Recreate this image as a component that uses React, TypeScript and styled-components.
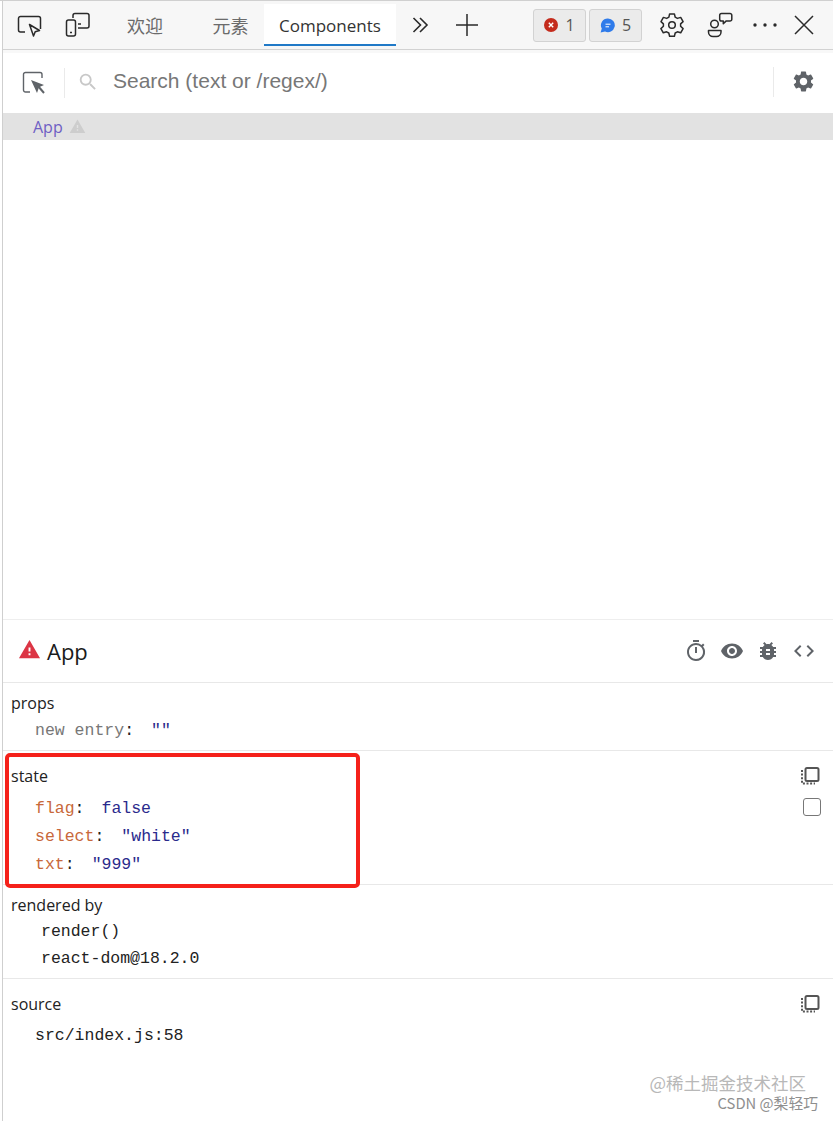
import styled, { createGlobalStyle } from 'styled-components';
import { MdBugReport, MdCode, MdOutlineTimer, MdSearch, MdSettings, MdVisibility, MdWarning } from 'react-icons/md';

const UI_FONT = '"Open Sans", "Noto Sans CJK SC", sans-serif';
const MONO_FONT = '"Liberation Mono", monospace';

const GlobalStyle = createGlobalStyle`
  html, body {
    margin: 0;
    padding: 0;
    background: #fff;
  }
`;

const Page = styled.div`
  position: relative;
  box-sizing: border-box;
  width: 833px;
  height: 1121px;
  overflow: hidden;
  padding-left: 3px;
  background: #fff;
  border-top: 1px solid #d0d0d0;
  font-family: ${UI_FONT};
  color: #222;

  &::before {
    content: '';
    position: absolute;
    left: 2px;
    top: 0;
    bottom: 0;
    width: 1px;
    background: #cfcfcf;
  }
`;

const Toolbar = styled.div`
  display: flex;
  align-items: stretch;
  height: 48px;
  padding-left: 3px;
  background: #f7f7f7;
  border-bottom: 1px solid #d2d2d2;
  box-sizing: content-box;
`;

const ToolButton = styled.div<{ $w?: number }>`
  display: flex;
  align-items: center;
  justify-content: center;
  flex: none;
  width: ${(p) => p.$w ?? 48}px;
  color: #2a2a2a;
`;

const Tabs = styled.div`
  display: flex;
  margin-left: 10px;
`;

const Tab = styled.div<{ $active?: boolean }>`
  display: flex;
  align-items: center;
  padding: 2px 15.5px 0 15px;
  font-size: ${(p) => (p.$active ? 17 : 18)}px;
  color: ${(p) => (p.$active ? '#333' : '#6b6b6b')};
  background: ${(p) => (p.$active ? '#fff' : 'transparent')};
  border-bottom: 2px solid ${(p) => (p.$active ? '#2079c7' : 'transparent')};
  margin-top: 3px;
  margin-bottom: 3px;
  box-sizing: border-box;

  &:first-child {
    margin-right: 19px;
  }
`;

const Counters = styled.div`
  display: flex;
  align-items: center;
  gap: 3px;
  margin-left: auto;
  margin-right: 6px;
`;

const Counter = styled.div`
  display: flex;
  align-items: center;
  justify-content: center;
  gap: 7px;
  box-sizing: border-box;
  width: 53px;
  height: 33px;
  background: #ebebeb;
  border: 1px solid #d2d2d2;
  border-radius: 3px;
  font-size: 16px;
  color: #555;
`;

const RightTools = styled.div`
  display: flex;
  margin-right: 11px;
`;

const SearchBar = styled.div`
  display: flex;
  align-items: center;
  height: 60px;
  border-top: 3px solid #f8f8f8;
  box-sizing: content-box;
`;

const SelectorSlot = styled.div`
  display: flex;
  align-items: center;
  justify-content: center;
  width: 61px;
  height: 30px;
  color: #5f6368;
  border-right: 1px solid #eaeaea;
`;

const SearchGlyph = styled(MdSearch)`
  margin: -3px 0 0 12px;
  color: #c8c8c8;
  flex: none;
`;

const SearchText = styled.div`
  flex: 1;
  margin: -4px 0 0 14px;
  font-family: 'Liberation Sans', sans-serif;
  font-size: 21px;
  color: #777;
`;

const SettingsSlot = styled.div`
  display: flex;
  align-items: center;
  justify-content: center;
  width: 59px;
  height: 30px;
  margin-top: -3px;
  color: #5f6368;
  border-left: 1px solid #eaeaea;
`;

const TreeRow = styled.div`
  display: flex;
  align-items: center;
  gap: 6px;
  height: 27px;
  padding-left: 30px;
  background: #e2e2e2;
  font-size: 16px;
  color: #6f5fc4;
`;

const TreeArea = styled.div`
  height: 479px;
  border-bottom: 1px solid #eeeeee;
`;

const InspectHeader = styled.div`
  display: flex;
  align-items: center;
  height: 62px;
  padding: 0 17px 0 15px;
  border-bottom: 1px solid #e8e8e8;
`;

const HeaderWarning = styled(MdWarning)`
  margin-top: -4px;
  color: #dc3545;
`;

const ComponentName = styled.div`
  flex: 1;
  margin-left: 6px;
  font-size: 22px;
  color: #1a1a1a;
`;

const InspectActions = styled.div`
  display: flex;
  gap: 12px;
  color: #5f6368;
`;

const Section = styled.section<{ $h: number; $last?: boolean; $top?: number }>`
  position: relative;
  box-sizing: border-box;
  height: ${(p) => p.$h}px;
  padding: ${(p) => p.$top ?? 7}px 0 0 8px;
  border-bottom: ${(p) => (p.$last ? 'none' : '1px solid #e8e8e8')};
`;

const SectionHead = styled.div<{ $gap?: number }>`
  display: flex;
  align-items: center;
  justify-content: space-between;
  height: 26px;
  padding-right: 13px;
  margin-bottom: ${(p) => p.$gap ?? 0}px;
  font-size: 16px;
  color: #222;
`;

const Row = styled.div<{ $h?: number; $indent?: number }>`
  display: flex;
  align-items: center;
  height: ${(p) => p.$h ?? 28}px;
  padding-left: ${(p) => p.$indent ?? 24}px;
  font-family: ${MONO_FONT};
  font-size: 16.5px;
  white-space: pre;
  color: #222;
`;

const Key = styled.span<{ $muted?: boolean }>`
  color: ${(p) => (p.$muted ? '#777' : '#c8683a')};
`;

const Value = styled.span`
  margin-left: 17px;
  color: #2a2a8c;
`;

const CheckBox = styled.div`
  position: absolute;
  right: 12px;
  top: 47px;
  box-sizing: border-box;
  width: 18px;
  height: 18px;
  border: 1.5px solid #777;
  border-radius: 3px;
  background: #fff;
`;

const Highlight = styled.div`
  position: absolute;
  left: 5px;
  top: 752px;
  box-sizing: border-box;
  width: 355px;
  height: 135px;
  border: 4px solid #f5211a;
  border-radius: 5px;
  pointer-events: none;
`;

const Watermark = styled.div`
  position: absolute;
  right: 15px;
  bottom: 8px;
  display: flex;
  flex-direction: column;
  align-items: flex-end;
  font-family: 'Noto Sans CJK SC', sans-serif;
  line-height: 20px;
`;

const WatermarkMain = styled.div`
  margin-right: 12px;
  font-size: 17.5px;
  color: #b8b8b8;
`;

const WatermarkSub = styled.div`
  font-size: 14.8px;
  color: #8f8f8f;
`;

const CopyIcon = () => (
  <svg width="20" height="20" viewBox="0 0 20 20" fill="none" stroke="#555">
    <rect x="5.5" y="2" width="13" height="13" rx="1.5" strokeWidth="2" />
    <path d="M2 4v13.5h13" strokeWidth="2" strokeDasharray="2 1.6" />
  </svg>
);

const App = () => (
  <Page>
    <GlobalStyle />
    <Toolbar>
      <ToolButton>
        <svg width="26" height="24" viewBox="0 0 26 24" fill="none" stroke="#2a2a2a" strokeWidth="1.5">
          <path d="M8 19H3.5A2 2 0 0 1 1.5 17V5.5a2 2 0 0 1 2-2h18a2 2 0 0 1 2 2V16" />
          <path d="M12.5 11.5l10 6-4.3 1.2-1.7 4.3z" strokeLinejoin="round" />
        </svg>
      </ToolButton>
      <ToolButton>
        <svg width="26" height="26" viewBox="0 0 26 26" fill="none" stroke="#2a2a2a" strokeWidth="1.5">
          <path d="M8 6V3.5a2 2 0 0 1 2-2h12a2 2 0 0 1 2 2V14a2 2 0 0 1-2 2h-9" />
          <rect x="1.5" y="8" width="9" height="16" rx="2" />
          <path d="M5 20.5h2M13 12h3" />
        </svg>
      </ToolButton>
      <Tabs>
        <Tab>欢迎</Tab>
        <Tab>元素</Tab>
        <Tab $active>Components</Tab>
      </Tabs>
      <ToolButton>
        <svg width="18" height="18" viewBox="0 0 18 18" fill="none" stroke="#2a2a2a" strokeWidth="1.6">
          <path d="M2.5 2l7 7-7 7M9 2l7 7-7 7" />
        </svg>
      </ToolButton>
      <ToolButton $w={46}>
        <svg width="24" height="24" viewBox="0 0 24 24" fill="none" stroke="#2a2a2a" strokeWidth="1.5">
          <path d="M12 1v22M1 12h22" />
        </svg>
      </ToolButton>
      <Counters>
        <Counter>
          <svg width="14" height="14" viewBox="0 0 14 14">
            <circle cx="7" cy="7" r="7" fill="#c42b1c" />
            <path d="M4.8 4.8l4.4 4.4M9.2 4.8l-4.4 4.4" stroke="#fff" strokeWidth="1.4" />
          </svg>
          1
        </Counter>
        <Counter>
          <svg width="15" height="15" viewBox="0 0 15 15">
            <path d="M8 .5a6.8 6.8 0 1 1-3 12.9L.6 14.6l1.2-4A6.8 6.8 0 0 1 8 .5z" fill="#2f7bea" />
            <path d="M5.5 6.2h5M5.5 8.8h3.5" stroke="#fff" strokeWidth="1" />
          </svg>
          5
        </Counter>
      </Counters>
      <RightTools>
        <ToolButton>
          <svg width="26" height="26" viewBox="0 0 26 26" fill="none" stroke="#2a2a2a" strokeWidth="1.5" strokeLinejoin="round">
            <circle cx="13" cy="13" r="3.3" />
            <path d="M10.6 1.9h4.8l.8 3.3 2.2 1.2 3.3-1 2.4 4.2-2.5 2.3v2.4l2.5 2.3-2.4 4.2-3.3-1-2.2 1.2-.8 3.3h-4.8l-.8-3.3-2.2-1.2-3.3 1-2.4-4.2 2.5-2.3v-2.4L2 9.6l2.4-4.2 3.3 1 2.2-1.2z" />
          </svg>
        </ToolButton>
        <ToolButton>
          <svg width="26" height="26" viewBox="0 0 26 26" fill="none" stroke="#2a2a2a" strokeWidth="1.5" strokeLinejoin="round">
            <circle cx="7.5" cy="12" r="3.8" />
            <path d="M1.5 18.5h12.5v1.5a4.5 4.5 0 0 1-4.5 4.5H6a4.5 4.5 0 0 1-4.5-4.5z" />
            <path d="M14.5 1.5h8.5a1.8 1.8 0 0 1 1.8 1.8v4a1.8 1.8 0 0 1-1.8 1.8h-4l-2.7 2.6V9h-1.8a1.8 1.8 0 0 1-1.8-1.8V3.3a1.8 1.8 0 0 1 1.8-1.8z" />
          </svg>
        </ToolButton>
        <ToolButton $w={42}>
          <svg width="24" height="4" viewBox="0 0 24 4" fill="#2a2a2a">
            <circle cx="2" cy="2" r="1.7" />
            <circle cx="12" cy="2" r="1.7" />
            <circle cx="22" cy="2" r="1.7" />
          </svg>
        </ToolButton>
        <ToolButton $w={36}>
          <svg width="20" height="20" viewBox="0 0 20 20" fill="none" stroke="#2a2a2a" strokeWidth="1.5">
            <path d="M1 1l18 18M19 1L1 19" />
          </svg>
        </ToolButton>
      </RightTools>
    </Toolbar>

    <SearchBar>
      <SelectorSlot>
        <svg width="24" height="24" viewBox="0 0 24 24" fill="none">
          <path d="M8 21H3.500a2 2 0 0 1-2-2V3.500a2 2 0 0 1 2-2H18a2 2 0 0 1 2 2V7" stroke="#5f6368" strokeWidth="1.4" />
          <path d="M9 9l13 5-5 2.300-2 5.700z" fill="#5f6368" />
          <path d="M16 15l6 7" stroke="#5f6368" strokeWidth="2" />
        </svg>
      </SelectorSlot>
      <SearchGlyph size={22} />
      <SearchText>Search (text or /regex/)</SearchText>
      <SettingsSlot>
        <MdSettings size={25} />
      </SettingsSlot>
    </SearchBar>

    <TreeRow>
      App
      <MdWarning size={17} color="#cdcdcd" />
    </TreeRow>
    <TreeArea />

    <InspectHeader>
      <HeaderWarning size={23} />
      <ComponentName>App</ComponentName>
      <InspectActions>
        <MdOutlineTimer size={24} />
        <MdVisibility size={24} />
        <MdBugReport size={24} />
        <MdCode size={24} />
      </InspectActions>
    </InspectHeader>

    <Section $h={68}>
      <SectionHead>props</SectionHead>
      <Row $h={29}>
        <Key $muted>new entry</Key>:
        <Value>""</Value>
      </Row>
    </Section>

    <Section $h={134} $top={12}>
      <SectionHead $gap={5}>
        state
        <CopyIcon />
      </SectionHead>
      <Row>
        <Key>flag</Key>:
        <Value>false</Value>
      </Row>
      <Row>
        <Key>select</Key>:
        <Value>"white"</Value>
      </Row>
      <Row>
        <Key>txt</Key>:
        <Value>"999"</Value>
      </Row>
      <CheckBox />
    </Section>

    <Section $h={94}>
      <SectionHead>rendered by</SectionHead>
      <Row $h={27} $indent={30}>render()</Row>
      <Row $h={27} $indent={30}>react-dom@18.2.0</Row>
    </Section>

    <Section $h={120} $last $top={12}>
      <SectionHead $gap={4}>
        source
        <CopyIcon />
      </SectionHead>
      <Row>src/index.js:58</Row>
    </Section>

    <Highlight />
    <Watermark>
      <WatermarkMain>@稀土掘金技术社区</WatermarkMain>
      <WatermarkSub>CSDN @梨轻巧</WatermarkSub>
    </Watermark>
  </Page>
);

export default App;
